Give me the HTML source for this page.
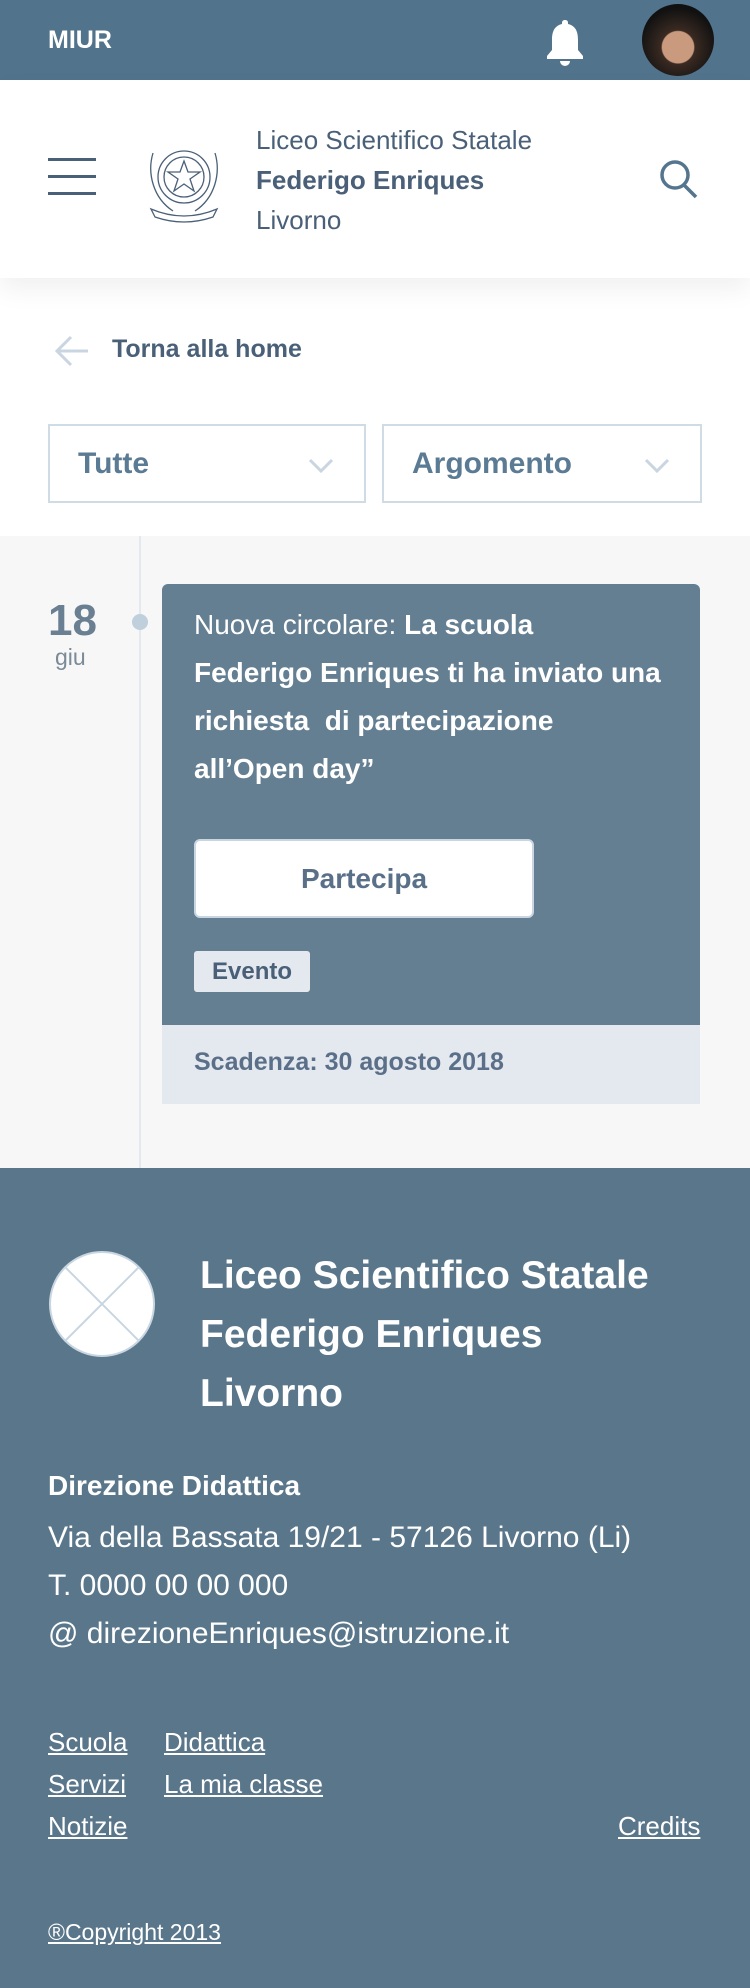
<!DOCTYPE html>
<html><head><meta charset="utf-8"><style>
*{margin:0;padding:0;box-sizing:border-box}
body{width:750px;height:1988px;font-family:"Liberation Sans",sans-serif;background:#fff;position:relative;overflow:hidden;color:#4a6078}
.a{position:absolute;white-space:nowrap}
.top{position:absolute;left:0;top:0;width:750px;height:80px;background:#51738c}
.hdr{position:absolute;left:0;top:80px;width:750px;height:198px;background:#fff;box-shadow:0 12px 24px rgba(0,0,0,0.06);z-index:2}
.gray{position:absolute;left:0;top:536px;width:750px;height:632px;background:#f7f7f7}
.foot{position:absolute;left:0;top:1168px;width:750px;height:820px;background:#5a768a;color:#fff}
.dd{position:absolute;top:424px;height:79px;border:2px solid #cfdce6;background:#fff}
.dd span{position:absolute;left:28px;top:21px;font-size:30px;font-weight:bold;color:#5b7a93}
.foot a{color:#fff;text-decoration:underline;font-size:26px;position:absolute}
</style></head><body>
<div class="top">
 <div class="a" style="left:48px;top:26px;font-size:25px;font-weight:bold;color:#fff">MIUR</div>
 <svg class="a" style="left:543px;top:18px" width="44" height="48" viewBox="0 0 44 48"><path d="M22 2c-2 0-3 1-3 3v1C11 8 9 14 9 22v10l-5 6v3h36v-3l-5-6V22c0-8-2-14-10-16V5c0-2-1-3-3-3z" fill="#fff"/><path d="M17 43a5 5 0 0 0 10 0z" fill="#fff"/></svg>
 <div class="a" style="left:642px;top:4px;width:72px;height:72px;border-radius:50%;background:radial-gradient(circle at 50% 60%,#c99a7e 0 28%,#3a2a22 30%,#111 70%)"></div>
</div>
<div class="hdr">
 <div class="a" style="left:48px;top:78px;width:48px;height:3px;background:#4a6078"></div>
 <div class="a" style="left:48px;top:95px;width:48px;height:3px;background:#4a6078"></div>
 <div class="a" style="left:48px;top:112px;width:48px;height:3px;background:#4a6078"></div>
 <svg class="a" style="left:143px;top:53px" width="82" height="92" viewBox="0 0 82 92" fill="none" stroke="#4a6078" stroke-width="1.3"><circle cx="41" cy="44" r="26"/><circle cx="41" cy="44" r="20"/><path d="M41 28l4 11h12l-10 7 4 12-10-7-10 7 4-12-10-7h12z"/><path d="M10 20c-6 20 0 45 20 58M72 20c6 20 0 45-20 58"/><path d="M8 76q33 14 66 0l-4 8q-29 10-58 0z"/></svg>
 <div class="a" style="left:256px;top:45px;font-size:26px;color:#4a6078">Liceo Scientifico Statale</div>
 <div class="a" style="left:256px;top:85px;font-size:26px;font-weight:bold;color:#4a6078">Federigo Enriques</div>
 <div class="a" style="left:256px;top:125px;font-size:26px;color:#4a6078">Livorno</div>
 <svg class="a" style="left:658px;top:78px" width="42" height="42" viewBox="0 0 42 42" fill="none" stroke="#55758f" stroke-width="3.5"><circle cx="17" cy="17" r="13"/><path d="M26 27l12 12"/></svg>
</div>
<svg class="a" style="left:54px;top:334px" width="36" height="34" viewBox="0 0 36 34" fill="none" stroke="#c9d6e2" stroke-width="3"><path d="M34 17H4M17 3L3 17l14 14"/></svg>
<div class="a" style="left:112px;top:335px;font-size:25px;font-weight:bold;color:#4a6078">Torna alla home</div>
<div class="dd" style="left:48px;width:318px"><span>Tutte</span><svg class="a" style="left:258px;top:32px" width="26" height="16" viewBox="0 0 26 16" fill="none" stroke="#c9d6e2" stroke-width="3"><path d="M2 2l11 11L24 2"/></svg></div>
<div class="dd" style="left:382px;width:320px"><span>Argomento</span><svg class="a" style="left:260px;top:32px" width="26" height="16" viewBox="0 0 26 16" fill="none" stroke="#c9d6e2" stroke-width="3"><path d="M2 2l11 11L24 2"/></svg></div>
<div class="gray">
 <div class="a" style="left:139px;top:0;width:2px;height:632px;background:#e3e9ef"></div>
 <div class="a" style="left:48px;top:60px;font-size:44px;font-weight:bold;color:#6a7f92">18</div>
 <div class="a" style="left:55px;top:108px;font-size:23px;color:#7a8a98">giu</div>
 <div class="a" style="left:132px;top:78px;width:16px;height:16px;border-radius:50%;background:#bfcfdc"></div>
 <div class="a" style="left:162px;top:48px;width:538px;height:441px;background:#647e92;border-radius:6px 6px 0 0"></div>
 <div class="a" style="left:162px;top:489px;width:538px;height:79px;background:#e4e9f0"></div>
 <div class="a" style="left:194px;top:65px;font-size:28px;line-height:48px;color:#fff">Nuova circolare: <b>La scuola<br>Federigo Enriques ti ha inviato una<br>richiesta &nbsp;di partecipazione<br>all’Open day”</b></div>
 <div class="a" style="left:194px;top:303px;width:340px;height:79px;background:#fff;border:2px solid #c9d6e2;border-radius:6px;text-align:center;line-height:75px;font-size:28px;font-weight:bold;color:#5a7088">Partecipa</div>
 <div class="a" style="left:194px;top:415px;width:116px;height:41px;background:#e4e9f0;border-radius:3px;text-align:center;line-height:41px;font-size:24px;font-weight:bold;color:#4a6078">Evento</div>
 <div class="a" style="left:194px;top:512px;font-size:25px;font-weight:bold;color:#5b7088">Scadenza: 30 agosto 2018</div>
</div>
<div class="foot">
 <svg class="a" style="left:48px;top:82px" width="108" height="108" viewBox="0 0 108 108" fill="#fff" stroke="#c9d6e2" stroke-width="2"><circle cx="54" cy="54" r="52"/><path d="M17 17l74 74M91 17L17 91" fill="none"/></svg>
 <div class="a" style="left:200px;top:78px;font-size:39px;line-height:59px;font-weight:bold">Liceo Scientifico Statale<br>Federigo Enriques<br>Livorno</div>
 <div class="a" style="left:48px;top:302px;font-size:28px;font-weight:bold">Direzione Didattica</div>
 <div class="a" style="left:48px;top:346px;font-size:30px;line-height:48px">Via della Bassata 19/21 - 57126 Livorno (Li)<br>T. 0000 00 00 000<br>@ direzioneEnriques@istruzione.it</div>
 <a style="left:48px;top:559px">Scuola</a><a style="left:164px;top:559px">Didattica</a>
 <a style="left:48px;top:601px">Servizi</a><a style="left:164px;top:601px">La mia classe</a>
 <a style="left:48px;top:643px">Notizie</a><a style="left:618px;top:643px">Credits</a>
 <a style="left:48px;top:751px;font-size:23px">®Copyright 2013</a>
</div>
</body></html>
